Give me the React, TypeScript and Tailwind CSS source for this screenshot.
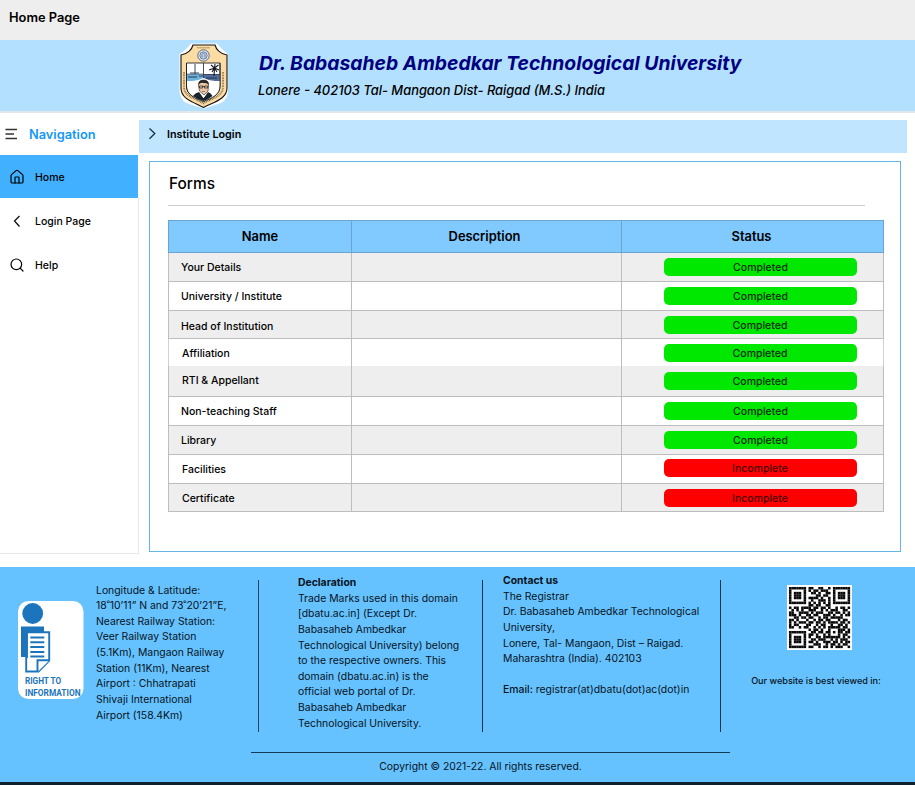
import { House, Search } from "lucide-react";

const rows = [
  { name: "Your Details", done: true, h: "h-[29px]", label: "pl-[12px] pt-[2px]", pill: "ml-[42px]", line: true },
  { name: "University / Institute", done: true, h: "h-[29px]", label: "pl-[12px] pt-[2px]", pill: "ml-[42px]", line: true },
  { name: "Head of Institution", done: true, h: "h-[28px]", label: "pl-[12px] pt-[5px]", pill: "ml-[41.5px]", line: true },
  { name: "Affiliation", done: true, h: "h-[27px]", label: "pl-[13px] pt-[3px]", pill: "ml-[41.5px]", line: false },
  { name: "RTI & Appellant", done: true, h: "h-[31px]", label: "pl-[13px] pb-[1px]", pill: "ml-[41.5px] mb-[1px]", line: true },
  { name: "Non-teaching Staff", done: true, h: "h-[29px]", label: "pl-[12px] pt-[2px]", pill: "ml-[42px] mb-[1px]", line: true },
  { name: "Library", done: true, h: "h-[29px]", label: "pl-[12px] pt-[1px]", pill: "ml-[42px]", line: true },
  { name: "Facilities", done: false, h: "h-[29px]", label: "pl-[13px] pt-[2px]", pill: "ml-[41.5px] mb-[2px]", line: true },
  { name: "Certificate", done: false, h: "h-[28px]", label: "pl-[13px] pt-[3px]", pill: "ml-[41.5px] mt-[1px]", line: true },
];

const qr = [
  "1111111011001100101111111",
  "1000001010110111001000001",
  "1011101001101001101011101",
  "1011101000011011001011101",
  "1011101011110100101011101",
  "1000001001001110101000001",
  "1111111010101010101111111",
  "0000000011011001100000000",
  "1011011110110110100101101",
  "0101010011100101011100110",
  "1100111101011100110110101",
  "1110100110110011101001011",
  "0011011011001011011111000",
  "1101000100101101100010110",
  "1010111011011010111101101",
  "1011000110010110010011010",
  "1100101100101010111110110",
  "0000000010110100100011101",
  "1111111001101101101011011",
  "1000001011010010100010110",
  "1011101010011011111110101",
  "1011101001101110010101110",
  "1011101011010011101101011",
  "1000001000111001011010110",
  "1111111011001011010111001",
];

function QrCode() {
  return (
    <svg className="h-[65px] w-[65px] bg-white" viewBox="-0.8 -0.8 26.6 26.6">
      {qr.map((line, y) =>
        line.split("").map((c, x) =>
          c === "1" ? <rect key={`${x}-${y}`} x={x} y={y} width="1.03" height="1.03" fill="#080808" /> : null
        )
      )}
    </svg>
  );
}

function Crest() {
  return (
    <svg className="h-[66px] w-[50px]" viewBox="0 0 50 66">
      <path d="M12 .5H38Q42 6 49 11V49Q48 60 36 62L25 65.500L13 62Q2 60 .5 49V11Q8 6 12 .5Z" fill="#fff" />
      <path d="M14 2H36C37 6 41 11 48 12V45C48 56 35 59 24.500 64.500C14 59 2 56 2 45V12C9 11 13 6 14 2Z" fill="#fbdca4" stroke="#151515" strokeWidth="1.100" />
      <path d="M7.500 20H41V43C41 52 33 55 24.500 58.500C16 55 7.500 52 7.500 43Z" fill="#fff" stroke="#222" strokeWidth=".9" />
      <rect x="8" y="31" width="16.500" height="7" fill="#6db1dc" />
      <rect x="25" y="31" width="15.600" height="7" fill="#526c9c" />
      <path d="M24.500 20V35" stroke="#222" strokeWidth=".8" />
      <path d="M8 31H24M25 31.500H41" stroke="#222" strokeWidth=".5" />
      <path d="M16 21V31M11 30H20M9 34H18M20 33H24M27 35H38" stroke="#1c3048" strokeWidth=".9" fill="none" />
      <path d="M35 33L35.500 25M35.500 25L30 27M35.500 25L32 22M35.500 25L36 21M35.500 25L39.500 22M35.500 25L40 27M35.500 25L33 29M35.500 25L38 29" stroke="#171c22" strokeWidth="1.100" fill="none" />
      <path d="M8 38Q17 39 24.500 35Q32 39 41 38V43C41 52 33 55 24.500 58.500C16 55 8 52 8 43Z" fill="#fff" />
      <path d="M7.500 20V43C7.500 52 16 55 24.500 58.500C33 55 41 52 41 43V20" fill="none" stroke="#222" strokeWidth=".9" />
      <circle cx="24.500" cy="12.500" r="5.700" fill="#e8eef2" stroke="#334a66" strokeWidth=".8" />
      <circle cx="24.500" cy="12.500" r="3.700" fill="#c3cfe0" stroke="#526a98" strokeWidth=".8" />
      <path d="M23 14.500V11.500L24.500 10L26 11.500V14.500" fill="none" stroke="#60779c" strokeWidth=".8" />
      <path d="M18 4.800H31" stroke="#69583d" strokeWidth=".7" strokeDasharray="1 .4" />
      <path d="M5 29V44C5 53 15 55 24.500 60.500C34 55 44 53 44 44V29" fill="none" stroke="#765b3c" strokeWidth="1.700" strokeDasharray=".8 .8" />
      <path d="M14 53Q16 50 20 49L24.500 55L29 49Q32 50 33.500 53Q30 56 24.500 58Q18 56 14 53" fill="#18232e" />
      <path d="M19.500 43Q19 37 24.500 37Q30 37 29.500 43L29 48L25 52L20.500 48Z" fill="#ecc6a4" stroke="#282420" strokeWidth=".6" />
      <path d="M19.500 42Q19 37 24.500 37Q30 37 29.700 42Q28 39.500 25 40Q21 39 19.500 42Z" fill="#262626" />
      <path d="M20.500 43H23.700V45H20.500ZM25.500 43H28.700V45H25.500ZM23.700 43.500H25.500" fill="none" stroke="#171717" strokeWidth=".7" />
      <path d="M23 48.500H26" stroke="#704c38" strokeWidth=".6" />
      <path d="M20.500 49L24.500 55L29 49L26 52H23Z" fill="#fff" />
    </svg>
  );
}

function RtiBadge() {
  return (
    <svg className="h-[98px] w-[66px]" viewBox="0 0 66 98">
      <rect width="65.500" height="98" rx="10.500" fill="#fff" />
      <circle cx="14.700" cy="12.500" r="10.400" fill="#1c75bc" />
      <path d="M3 25.500H26V31H9V56H3Z" fill="#1c75bc" />
      <path d="M9 31.300H31.200V59.500L20.500 70.500H8.200V56H9Z" fill="#fff" stroke="#1c75bc" strokeWidth="1.900" />
      <path d="M19.500 71V59.200H31.500" fill="#fff" stroke="#1c75bc" strokeWidth="1.900" />
      <path d="M12.300 36.500H26.300M12.300 41.300H26.300M12.300 46.100H26.300M12.300 50.900H26.300M12.300 55.500H26.300" stroke="#1c75bc" strokeWidth="2" />
      <g fill="#1c75bc" fontFamily="Roboto, sans-serif" fontWeight="700" fontSize="9">
        <text x="7" y="82.700" textLength="36" lengthAdjust="spacingAndGlyphs">RIGHT TO</text>
        <text x="7" y="95" textLength="55.500" lengthAdjust="spacingAndGlyphs">INFORMATION</text>
      </g>
    </svg>
  );
}

export default function App() {
  return (
    <div className="flex h-[785px] w-[915px] flex-col overflow-hidden bg-white font-['Inter',sans-serif] text-black">
      <div className="h-10 shrink-0 bg-[#eeeeee] pl-[9px] pt-[8px] text-[12.85px] leading-[20px] font-semibold">Home Page</div>
      <header className="flex h-[73px] shrink-0 border-b-2 border-[#dfe7ed] bg-[#b3e0ff] pl-[179px]">
        <div className="pt-[3px]"><Crest /></div>
        <div className="pl-[29px] pt-[10px] italic">
          <h1 className="whitespace-nowrap pl-px text-[19.35px] leading-[27px] font-bold text-[#000080]">Dr. Babasaheb Ambedkar Technological University</h1>
          <p className="mt-[4px] whitespace-nowrap text-[12.9px] leading-[20px] font-medium">Lonere - 402103 Tal- Mangaon Dist- Raigad (M.S.) India</p>
        </div>
      </header>

      <div className="flex h-[454px] shrink-0">
        <aside className="flex h-[441px] w-[139px] shrink-0 flex-col text-[10.5px] font-medium">
          <div className="flex h-[42px] shrink-0 items-center pl-[5px]">
            <svg className="h-3 w-3 stroke-[#333]" viewBox="0 0 12 12" strokeWidth="1.3"><path d="M.5 1.500H12M.5 6H9M.5 10.500H12" /></svg>
            <span className="ml-[12px] pt-[2px] text-[12.8px] font-semibold text-[#1597fa]">Navigation</span>
          </div>
          <div className="flex h-[43px] w-[138px] shrink-0 items-center bg-[#40b0ff] pl-[9px]"><House size={16} strokeWidth={1.8} /><span className="ml-[10px] pt-[2px]">Home</span></div>
          <div className="flex-1 border-r border-b border-[#e8e8e8]">
            <div className="flex h-[45px] items-center pl-[9px]">
              <svg className="h-4 w-4" viewBox="0 0 16 16" fill="none" stroke="#111" strokeWidth="1.300"><path d="M10.500 3L5.500 8L10.500 13.500" /></svg>
              <span className="ml-[10px] pt-[2px]">Login Page</span>
            </div>
            <div className="flex h-[44px] items-center pl-[9px]"><Search size={16} strokeWidth={1.8} /><span className="ml-[10px] pt-[2px]">Help</span></div>
          </div>
        </aside>
        <main className="flex flex-col pt-[7px]">
          <div className="flex h-[33px] w-[768px] items-center bg-[#bfe5ff] pl-[5px] pb-[5px] text-[10.8px] font-semibold">
            <svg className="h-4 w-4" viewBox="0 0 16 16" fill="none" stroke="#12324b" strokeWidth="1.300"><path d="M5.500 2.500L10.800 7.500L5.500 12.700" /></svg>
            <span className="ml-[7px] pt-[3px]">Institute Login</span>
          </div>
          <section className="ml-[10px] mt-2 h-[391px] w-[752px] border border-[#65b5e5] pl-[18px]">
            <h2 className="h-[43px] pl-px pt-[12px] text-[15.4px] leading-[20px] font-medium">Forms</h2>
            <div className="h-px w-[697px] bg-[#cdcdcd]" />
            <div className="mt-[14px] w-[716px]">
              <div className="flex h-[33px] border border-[#6aa5d2] bg-[#80caff] text-center text-[12.9px] leading-[32px] font-semibold">
                <div className="w-[182px]">Name</div>
                <div className="w-[270px] border-l border-[#6aa5d2] pr-[4px]">Description</div>
                <div className="w-[262px] border-l border-[#6aa5d2] pr-[2px]">Status</div>
              </div>
              {rows.map((r, i) => (
                <div key={r.name} className={`flex border-x ${r.h} ${r.line ? "border-b border-[#bdbdbd]" : "border-[#d2d2d2]"} ${i % 2 ? "bg-white" : "bg-[#eeeeee]"}`}>
                  <div className={`flex w-[182px] items-center text-[10.5px] font-medium ${r.label}`}>{r.name}</div>
                  <div className="w-[270px] border-l border-[#bdbdbd]" />
                  <div className="flex flex-1 items-center border-l border-[#bdbdbd]">
                    <div className={`h-[18px] w-[193px] rounded-[5px] text-center text-[10.5px] leading-[19px] font-medium ${r.pill} ${r.done ? "bg-[#00e800] text-[#052b05]" : "bg-[#ff0000] text-[#480000]"}`}>{r.done ? "Completed" : "Incomplete"}</div>
                  </div>
                </div>
              ))}
            </div>
          </section>
        </main>
      </div>

      <footer className="h-[218px] shrink-0 border-b-[3px] border-[#10202c] bg-[#66c2ff] text-[10.4px] leading-[15.63px] text-[#07131c]">
        <div className="flex h-[185px] pt-[13px]">
          <div className="w-[96px] shrink-0 pl-[18px] pt-[21px]"><RtiBadge /></div>
          <p className="w-[162px] shrink-0 whitespace-nowrap pt-[2.6px]">Longitude &amp; Latitude:<br />18˚10’11” N and 73˚20’21”E,<br />Nearest Railway Station:<br />Veer Railway Station<br />(5.1Km), Mangaon Railway<br />Station (11Km), Nearest<br />Airport : Chhatrapati<br />Shivaji International<br />Airport (158.4Km)</p>
          <div className="h-[152px] w-[224px] shrink-0 whitespace-nowrap border-l border-[#204764] pl-[39px]">
            <div className="-mt-[5px]"><b>Declaration</b><br />Trade Marks used in this domain<br />[dbatu.ac.in] (Except Dr.<br />Babasaheb Ambedkar<br />Technological University) belong<br />to the respective owners. This<br />domain (dbatu.ac.in) is the<br />official web portal of Dr.<br />Babasaheb Ambedkar<br />Technological University.</div>
          </div>
          <div className="h-[152px] w-[239px] shrink-0 whitespace-nowrap border-x border-[#123349] pl-[20px]">
            <div className="-mt-[7px]"><b>Contact us</b><br />The Registrar<br />Dr. Babasaheb Ambedkar Technological<br />University,<br />Lonere, Tal- Mangaon, Dist – Raigad.<br />Maharashtra (India). 402103<br /><br /><span className="font-medium">Email:</span> registrar(at)dbatu(dot)ac(dot)in</div>
          </div>
          <div className="flex w-[190px] flex-col items-center pt-[5px]">
            <div className="pl-[6px]"><QrCode /></div>
            <p className="mt-[23px] whitespace-nowrap text-[9.1px] font-medium">Our website is best viewed in:</p>
          </div>
        </div>
        <div className="ml-[251px] h-px w-[479px] bg-[#153c56]" />
        <p className="ml-[2px] w-[957px] pt-[6px] text-center">Copyright © 2021-22. All rights reserved.</p>
      </footer>
    </div>
  );
}
